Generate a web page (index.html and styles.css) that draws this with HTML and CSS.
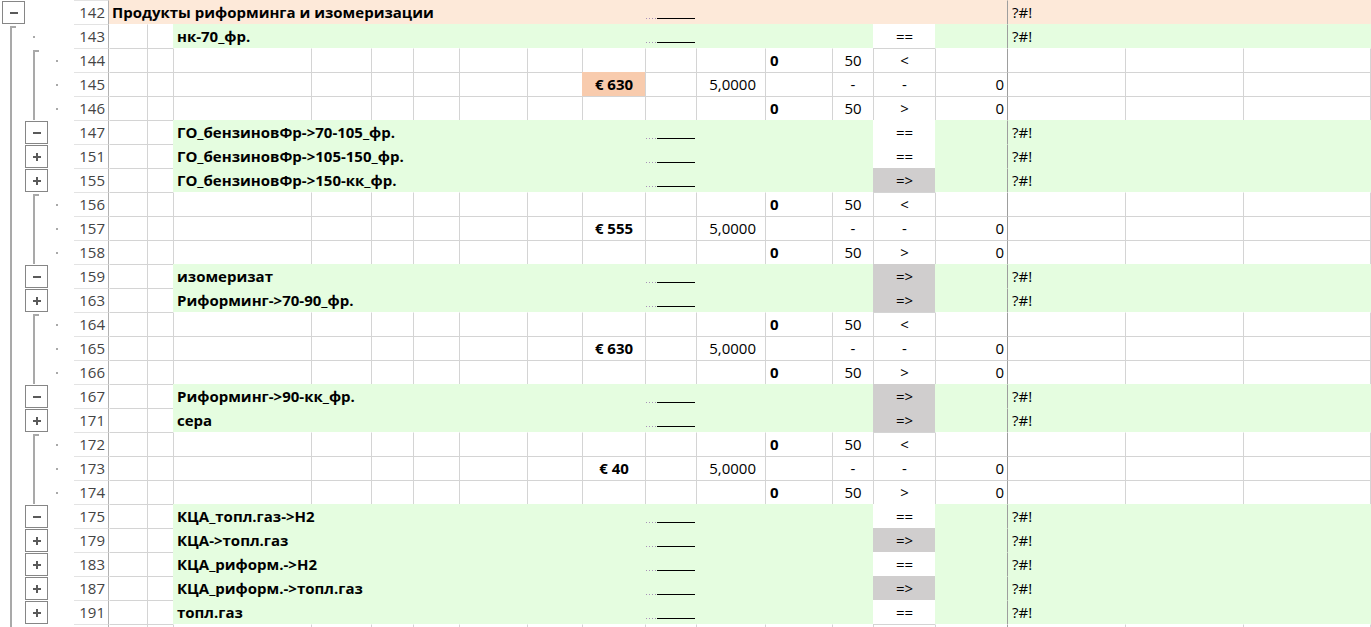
FILE: index.html
```html
<!DOCTYPE html>
<html lang="ru">
<head>
<meta charset="utf-8">
<title>Sheet</title>
<link rel="stylesheet" href="styles.css">
</head>
<body>
<div class="sheet">

<div class="row pk">
<div class="ol"><i class="btn minus"></i><i></i><i></i></div>
<div class="rh">142</div>
<div class="lab wide"><span>Продукты риформинга и изомеризации</span><i class="mk"></i></div>
<div class="c m f"></div><div class="c f"></div><div class="tail">?#!</div>
</div>

<div class="row first">
<div class="ol"><i class="st"></i><i class="dt"></i><i></i></div>
<div class="rh">143</div>
<div class="c a"></div><div class="c"></div>
<div class="lab"><span>нк-70_фр.</span><i class="mk"></i></div>
<div class="c m w">==</div><div class="c f"></div><div class="tail">?#!</div>
</div>

<div class="row after">
<div class="ol"><i class="ln"></i><i class="st"></i><i class="dt"></i></div>
<div class="rh">144</div>
<div class="c a"></div><div class="c"></div><div class="c"></div><div class="c"></div><div class="c"></div><div class="c"></div><div class="c"></div><div class="c"></div><div class="c"></div><div class="c"></div><div class="c"></div>
<div class="c b">0</div><div class="c ct">50</div><div class="c ct m">&lt;</div><div class="c"></div><div class="c o"></div><div class="c"></div><div class="c"></div><div class="c e"></div>
</div>

<div class="row">
<div class="ol"><i class="ln"></i><i class="ln"></i><i class="dt"></i></div>
<div class="rh">145</div>
<div class="c a"></div><div class="c"></div><div class="c"></div><div class="c"></div><div class="c"></div><div class="c"></div><div class="c"></div><div class="c"></div>
<div class="c ct b hl">€ 630</div><div class="c"></div><div class="c k">5,0000</div><div class="c"></div><div class="c ct">-</div><div class="c ct m">-</div><div class="c n">0</div><div class="c o"></div><div class="c"></div><div class="c"></div><div class="c e"></div>
</div>

<div class="row">
<div class="ol"><i class="ln"></i><i class="ln"></i><i class="dt"></i></div>
<div class="rh">146</div>
<div class="c a"></div><div class="c"></div><div class="c"></div><div class="c"></div><div class="c"></div><div class="c"></div><div class="c"></div><div class="c"></div><div class="c"></div><div class="c"></div><div class="c"></div>
<div class="c b">0</div><div class="c ct">50</div><div class="c ct m">&gt;</div><div class="c n">0</div><div class="c o"></div><div class="c"></div><div class="c"></div><div class="c e"></div>
</div>

<div class="row">
<div class="ol"><i class="ln"></i><i class="btn minus"></i><i></i></div>
<div class="rh">147</div>
<div class="c a"></div><div class="c"></div>
<div class="lab"><span>ГО_бензиновФр-&gt;70-105_фр.</span><i class="mk"></i></div>
<div class="c m w">==</div><div class="c f"></div><div class="tail">?#!</div>
</div>

<div class="row">
<div class="ol"><i class="ln"></i><i class="btn plus"></i><i></i></div>
<div class="rh">151</div>
<div class="c a"></div><div class="c"></div>
<div class="lab"><span>ГО_бензиновФр-&gt;105-150_фр.</span><i class="mk"></i></div>
<div class="c m w">==</div><div class="c f"></div><div class="tail">?#!</div>
</div>

<div class="row">
<div class="ol"><i class="ln"></i><i class="btn plus"></i><i></i></div>
<div class="rh">155</div>
<div class="c a"></div><div class="c"></div>
<div class="lab"><span>ГО_бензиновФр-&gt;150-кк_фр.</span><i class="mk"></i></div>
<div class="c m gr">=&gt;</div><div class="c f"></div><div class="tail">?#!</div>
</div>

<div class="row after">
<div class="ol"><i class="ln"></i><i class="st"></i><i class="dt"></i></div>
<div class="rh">156</div>
<div class="c a"></div><div class="c"></div><div class="c"></div><div class="c"></div><div class="c"></div><div class="c"></div><div class="c"></div><div class="c"></div><div class="c"></div><div class="c"></div><div class="c"></div>
<div class="c b">0</div><div class="c ct">50</div><div class="c ct m">&lt;</div><div class="c"></div><div class="c o"></div><div class="c"></div><div class="c"></div><div class="c e"></div>
</div>

<div class="row">
<div class="ol"><i class="ln"></i><i class="ln"></i><i class="dt"></i></div>
<div class="rh">157</div>
<div class="c a"></div><div class="c"></div><div class="c"></div><div class="c"></div><div class="c"></div><div class="c"></div><div class="c"></div><div class="c"></div>
<div class="c ct b">€ 555</div><div class="c"></div><div class="c k">5,0000</div><div class="c"></div><div class="c ct">-</div><div class="c ct m">-</div><div class="c n">0</div><div class="c o"></div><div class="c"></div><div class="c"></div><div class="c e"></div>
</div>

<div class="row">
<div class="ol"><i class="ln"></i><i class="ln"></i><i class="dt"></i></div>
<div class="rh">158</div>
<div class="c a"></div><div class="c"></div><div class="c"></div><div class="c"></div><div class="c"></div><div class="c"></div><div class="c"></div><div class="c"></div><div class="c"></div><div class="c"></div><div class="c"></div>
<div class="c b">0</div><div class="c ct">50</div><div class="c ct m">&gt;</div><div class="c n">0</div><div class="c o"></div><div class="c"></div><div class="c"></div><div class="c e"></div>
</div>

<div class="row">
<div class="ol"><i class="ln"></i><i class="btn minus"></i><i></i></div>
<div class="rh">159</div>
<div class="c a"></div><div class="c"></div>
<div class="lab"><span>изомеризат</span><i class="mk"></i></div>
<div class="c m gr">=&gt;</div><div class="c f"></div><div class="tail">?#!</div>
</div>

<div class="row">
<div class="ol"><i class="ln"></i><i class="btn plus"></i><i></i></div>
<div class="rh">163</div>
<div class="c a"></div><div class="c"></div>
<div class="lab"><span>Риформинг-&gt;70-90_фр.</span><i class="mk"></i></div>
<div class="c m gr">=&gt;</div><div class="c f"></div><div class="tail">?#!</div>
</div>

<div class="row after">
<div class="ol"><i class="ln"></i><i class="st"></i><i class="dt"></i></div>
<div class="rh">164</div>
<div class="c a"></div><div class="c"></div><div class="c"></div><div class="c"></div><div class="c"></div><div class="c"></div><div class="c"></div><div class="c"></div><div class="c"></div><div class="c"></div><div class="c"></div>
<div class="c b">0</div><div class="c ct">50</div><div class="c ct m">&lt;</div><div class="c"></div><div class="c o"></div><div class="c"></div><div class="c"></div><div class="c e"></div>
</div>

<div class="row">
<div class="ol"><i class="ln"></i><i class="ln"></i><i class="dt"></i></div>
<div class="rh">165</div>
<div class="c a"></div><div class="c"></div><div class="c"></div><div class="c"></div><div class="c"></div><div class="c"></div><div class="c"></div><div class="c"></div>
<div class="c ct b">€ 630</div><div class="c"></div><div class="c k">5,0000</div><div class="c"></div><div class="c ct">-</div><div class="c ct m">-</div><div class="c n">0</div><div class="c o"></div><div class="c"></div><div class="c"></div><div class="c e"></div>
</div>

<div class="row">
<div class="ol"><i class="ln"></i><i class="ln"></i><i class="dt"></i></div>
<div class="rh">166</div>
<div class="c a"></div><div class="c"></div><div class="c"></div><div class="c"></div><div class="c"></div><div class="c"></div><div class="c"></div><div class="c"></div><div class="c"></div><div class="c"></div><div class="c"></div>
<div class="c b">0</div><div class="c ct">50</div><div class="c ct m">&gt;</div><div class="c n">0</div><div class="c o"></div><div class="c"></div><div class="c"></div><div class="c e"></div>
</div>

<div class="row">
<div class="ol"><i class="ln"></i><i class="btn minus"></i><i></i></div>
<div class="rh">167</div>
<div class="c a"></div><div class="c"></div>
<div class="lab"><span>Риформинг-&gt;90-кк_фр.</span><i class="mk"></i></div>
<div class="c m gr">=&gt;</div><div class="c f"></div><div class="tail">?#!</div>
</div>

<div class="row">
<div class="ol"><i class="ln"></i><i class="btn plus"></i><i></i></div>
<div class="rh">171</div>
<div class="c a"></div><div class="c"></div>
<div class="lab"><span>сера</span><i class="mk"></i></div>
<div class="c m gr">=&gt;</div><div class="c f"></div><div class="tail">?#!</div>
</div>

<div class="row after">
<div class="ol"><i class="ln"></i><i class="st"></i><i class="dt"></i></div>
<div class="rh">172</div>
<div class="c a"></div><div class="c"></div><div class="c"></div><div class="c"></div><div class="c"></div><div class="c"></div><div class="c"></div><div class="c"></div><div class="c"></div><div class="c"></div><div class="c"></div>
<div class="c b">0</div><div class="c ct">50</div><div class="c ct m">&lt;</div><div class="c"></div><div class="c o"></div><div class="c"></div><div class="c"></div><div class="c e"></div>
</div>

<div class="row">
<div class="ol"><i class="ln"></i><i class="ln"></i><i class="dt"></i></div>
<div class="rh">173</div>
<div class="c a"></div><div class="c"></div><div class="c"></div><div class="c"></div><div class="c"></div><div class="c"></div><div class="c"></div><div class="c"></div>
<div class="c ct b">€ 40</div><div class="c"></div><div class="c k">5,0000</div><div class="c"></div><div class="c ct">-</div><div class="c ct m">-</div><div class="c n">0</div><div class="c o"></div><div class="c"></div><div class="c"></div><div class="c e"></div>
</div>

<div class="row">
<div class="ol"><i class="ln"></i><i class="ln"></i><i class="dt"></i></div>
<div class="rh">174</div>
<div class="c a"></div><div class="c"></div><div class="c"></div><div class="c"></div><div class="c"></div><div class="c"></div><div class="c"></div><div class="c"></div><div class="c"></div><div class="c"></div><div class="c"></div>
<div class="c b">0</div><div class="c ct">50</div><div class="c ct m">&gt;</div><div class="c n">0</div><div class="c o"></div><div class="c"></div><div class="c"></div><div class="c e"></div>
</div>

<div class="row">
<div class="ol"><i class="ln"></i><i class="btn minus"></i><i></i></div>
<div class="rh">175</div>
<div class="c a"></div><div class="c"></div>
<div class="lab"><span>КЦА_топл.газ-&gt;H2</span><i class="mk"></i></div>
<div class="c m w">==</div><div class="c f"></div><div class="tail">?#!</div>
</div>

<div class="row">
<div class="ol"><i class="ln"></i><i class="btn plus"></i><i></i></div>
<div class="rh">179</div>
<div class="c a"></div><div class="c"></div>
<div class="lab"><span>КЦА-&gt;топл.газ</span><i class="mk"></i></div>
<div class="c m gr">=&gt;</div><div class="c f"></div><div class="tail">?#!</div>
</div>

<div class="row">
<div class="ol"><i class="ln"></i><i class="btn plus"></i><i></i></div>
<div class="rh">183</div>
<div class="c a"></div><div class="c"></div>
<div class="lab"><span>КЦА_риформ.-&gt;H2</span><i class="mk"></i></div>
<div class="c m w">==</div><div class="c f"></div><div class="tail">?#!</div>
</div>

<div class="row">
<div class="ol"><i class="ln"></i><i class="btn plus"></i><i></i></div>
<div class="rh">187</div>
<div class="c a"></div><div class="c"></div>
<div class="lab"><span>КЦА_риформ.-&gt;топл.газ</span><i class="mk"></i></div>
<div class="c m gr">=&gt;</div><div class="c f"></div><div class="tail">?#!</div>
</div>

<div class="row">
<div class="ol"><i class="ln"></i><i class="btn plus"></i><i></i></div>
<div class="rh">191</div>
<div class="c a"></div><div class="c"></div>
<div class="lab"><span>топл.газ</span><i class="mk"></i></div>
<div class="c m w">==</div><div class="c f"></div><div class="tail">?#!</div>
</div>

<div class="row after">
<div class="ol"><i class="ln"></i><i></i><i></i></div>
<div class="rh"></div>
<div class="c a"></div><div class="c"></div><div class="c"></div><div class="c"></div><div class="c"></div><div class="c"></div><div class="c"></div><div class="c"></div><div class="c"></div><div class="c"></div><div class="c"></div>
<div class="c"></div><div class="c"></div><div class="c m"></div><div class="c"></div><div class="c o"></div><div class="c"></div><div class="c"></div><div class="c e"></div>
</div>

</div>
</body>
</html>
```

FILE: styles.css
```css
html, body {
  margin: 0;
  padding: 0;
  background: #ffffff;
  overflow: hidden;
}

body {
  font-family: "Open Sans", "Noto Sans", "DejaVu Sans", sans-serif;
  font-size: 15px;
  color: #000;
}

.sheet {
  display: grid;
  grid-template-columns: 74px 35px 38px 26px 138px 60px 42px 46px 68px 55px 63px 51px 69px 67px 41px 62px 72px 118px 118px 127px 1px;
  grid-auto-rows: 24px;
  width: 1371px;
}

.row { display: contents; }

/* ---------- outline gutter ---------- */
.ol {
  display: grid;
  grid-template-columns: 23px 23px 23px;
  padding-left: 2px;
  height: 24px;
}
.ol i { display: block; height: 24px; }
.ol .ln {
  background: linear-gradient(#a9a9a9, #a9a9a9) 8px 0 / 2px 100% no-repeat;
}
.ol .st {
  background:
    linear-gradient(#a9a9a9, #a9a9a9) 8px 2px / 2px 100% no-repeat,
    linear-gradient(#a9a9a9, #a9a9a9) 8px 2px / 6px 2px no-repeat;
}
.ol .dt {
  background: linear-gradient(#a9a9a9, #a9a9a9) 8px 12px / 2px 2px no-repeat;
}
.ol .btn {
  box-sizing: border-box;
  width: 23px;
  height: 23px;
  margin-top: 1px;
  border: 1px solid #868686;
  background-color: #fff;
}
.ol .minus {
  background: #fff linear-gradient(#5a5a5a, #5a5a5a) 7px 10px / 8px 2px no-repeat;
}
.ol .plus {
  background:
    linear-gradient(#5a5a5a, #5a5a5a) 7px 10px / 8px 2px no-repeat,
    linear-gradient(#5a5a5a, #5a5a5a) 10px 7px / 2px 8px no-repeat,
    #fff;
}

/* ---------- row header ---------- */
.rh {
  box-sizing: border-box;
  border-top: 1px solid #e3e3e3;
  border-right: 1px solid #b3b3b3;
  text-align: right;
  padding-right: 3px;
  color: #444;
  line-height: 23px;
  font-size: 15px;
}

/* ---------- cells ---------- */
.c {
  box-sizing: border-box;
  border-left: 1px solid #d4d4d4;
  border-top: 1px solid #d4d4d4;
  line-height: 23px;
  white-space: nowrap;
  padding: 0 4px;
  overflow: visible;
}
.c.a { border-left-color: transparent; }
.c.e { padding: 0; }
.c.o { border-left-color: #9e9e9e; }
.b { font-weight: 700; }
.ct { text-align: center; padding: 0; }
.k { text-align: right; padding-right: 9px; }
.n { text-align: right; padding-right: 3px; }
.hl { background: #f8cbad; border-color: transparent; }

.first > .c { border-top-color: transparent; }
.after > .c:nth-child(n+5):not(.m) { border-top-color: transparent; }

/* filled (green) cells */
.c.f { background: #e5fde0; border-color: transparent; }
.c.m.w { background: #fff; border-color: transparent; text-align: center; padding: 0; }
.c.m.gr { background: #d0cece; border-color: transparent; text-align: center; padding: 0; }

.lab {
  grid-column: span 11;
  box-sizing: border-box;
  border-top: 1px solid transparent;
  border-left: 1px solid transparent;
  background: #e5fde0;
  display: grid;
  grid-template-columns: 472px 49px;
  align-items: start;
}
.lab span {
  font-weight: 700;
  line-height: 23px;
  white-space: nowrap;
  padding-left: 3px;
}
.lab .mk {
  display: block;
  margin-top: 17px;
  height: 1px;
  width: 49px;
  background:
    linear-gradient(#000, #000) right 0 / 38px 1px no-repeat,
    repeating-linear-gradient(90deg, #a892b8 0 1px, transparent 1px 3px) left 0 / 11px 1px no-repeat;
}

.tail {
  grid-column: span 4;
  box-sizing: border-box;
  border-top: 1px solid transparent;
  border-left: 1px solid #9e9e9e;
  background: #e5fde0;
  line-height: 23px;
  padding-left: 4px;
}

/* peach title row */
.pk .lab { grid-column: span 13; grid-template-columns: 536px 49px; }
.pk .lab span { padding-left: 2px; }
.pk .lab,
.pk .c.f,
.pk .tail { background: #fde9d9; }
.pk .c.m.f { background: #fde9d9; border-color: transparent; }
```
